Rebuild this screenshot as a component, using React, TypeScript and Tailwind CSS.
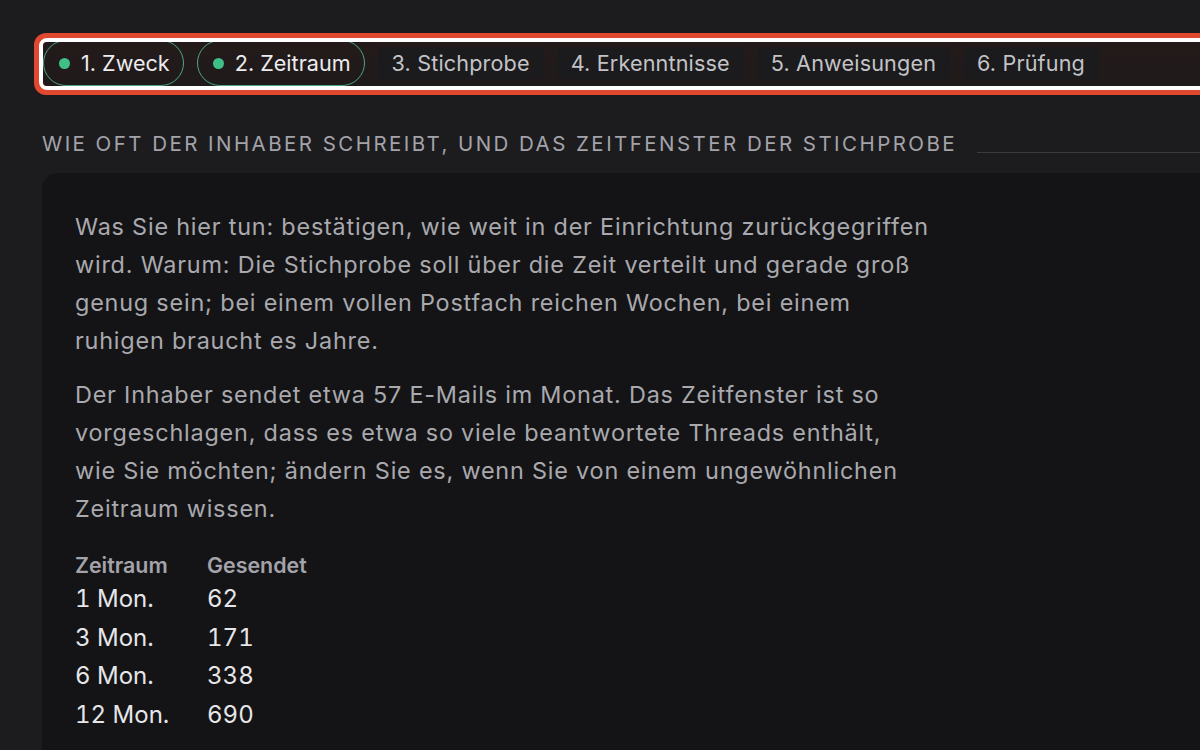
import React from 'react';

const steps = [
  { label: '1. Zweck', done: true },
  { label: '2. Zeitraum', done: true },
  { label: '3. Stichprobe', done: false },
  { label: '4. Erkenntnisse', done: false },
  { label: '5. Anweisungen', done: false },
  { label: '6. Prüfung', done: false },
];

const rows = [
  { period: '1 Mon.', sent: '62' },
  { period: '3 Mon.', sent: '171' },
  { period: '6 Mon.', sent: '338' },
  { period: '12 Mon.', sent: '690' },
];

const App: React.FC = () => {
  return (
    <div
      className="w-[1200px] h-[750px] overflow-hidden bg-[#1c1c1f] text-[#a9a9ae]"
      style={{ fontFamily: 'Inter, "Noto Sans", sans-serif' }}
    >
      {/* Step bar, highlighted */}
      <div className="pt-[33px] pl-[34px]">
        <div className="w-[1200px] rounded-[12px] border-[5px] border-[#e0492f] bg-[#e0492f]">
          <div className="rounded-[8px] border-[4px] border-white overflow-hidden">
            <div className="h-[44px] flex items-center gap-[13px] bg-gradient-to-b from-[#241a1a] to-[#1f1a1b] pb-[2px]">
              {steps.map((s) =>
                s.done ? (
                  <div
                    key={s.label}
                    className="h-[46px] flex items-center gap-[11px] rounded-full border border-[#4fa783] pl-[15px] pr-[13px] text-[21.6px] text-[#ececee]"
                  >
                    <span className="w-[11px] h-[11px] rounded-full bg-[#3fbf85]" />
                    <span>{s.label}</span>
                  </div>
                ) : (
                  <div
                    key={s.label}
                    className="h-[32px] flex items-center rounded-[6px] bg-[#1b1a1c] px-[14px] text-[21.6px] tracking-[0.15px] text-[#c3c3c7]"
                  >
                    {s.label}
                  </div>
                )
              )}
            </div>
          </div>
        </div>
      </div>

      {/* Section header */}
      <div className="pl-[42px] mt-[35px] flex items-end gap-[20px]">
        <h2 className="text-[20.5px] leading-[28px] tracking-[2.45px] uppercase text-[#a3a3a9] whitespace-nowrap">
          Wie oft der Inhaber schreibt, und das Zeitfenster der Stichprobe
        </h2>
        <div className="flex-1 h-px bg-[#3a3a3f] mb-[5px]" />
      </div>

      {/* Card */}
      <div className="ml-[42px] mt-[15px] w-[1200px] h-[700px] rounded-tl-[16px] bg-[#141416] pl-[33px] pt-[35px]">
        <div className="max-w-[856px] text-[23.4px] leading-[38px] tracking-[0.8px] text-[#a9a9ae]">
          <p>
            Was Sie hier tun: bestätigen, wie weit in der Einrichtung zurückgegriffen wird. Warum: Die
            Stichprobe soll über die Zeit verteilt und gerade groß genug sein; bei einem vollen Postfach
            reichen Wochen, bei einem ruhigen braucht es Jahre.
          </p>
          <p className="mt-[16px]">
            Der Inhaber sendet etwa 57 E-Mails im Monat. Das Zeitfenster ist so vorgeschlagen, dass es etwa
            so viele beantwortete Threads enthält,
            <br />
            wie Sie möchten; ändern Sie es, wenn Sie von einem ungewöhnlichen Zeitraum wissen.
          </p>
        </div>

        <table className="mt-[22px] text-left">
          <thead>
            <tr className="text-[21.4px] leading-[30px] font-semibold text-[#a3a3a9]">
              <th className="w-[132px] font-semibold">Zeitraum</th>
              <th className="font-semibold">Gesendet</th>
            </tr>
          </thead>
          <tbody className="text-[24px] leading-[38.5px] text-[#e6e6e8] tabular-nums">
            {rows.map((r) => (
              <tr key={r.period}>
                <td>{r.period}</td>
                <td>{r.sent}</td>
              </tr>
            ))}
          </tbody>
        </table>
      </div>
    </div>
  );
};

export default App;
